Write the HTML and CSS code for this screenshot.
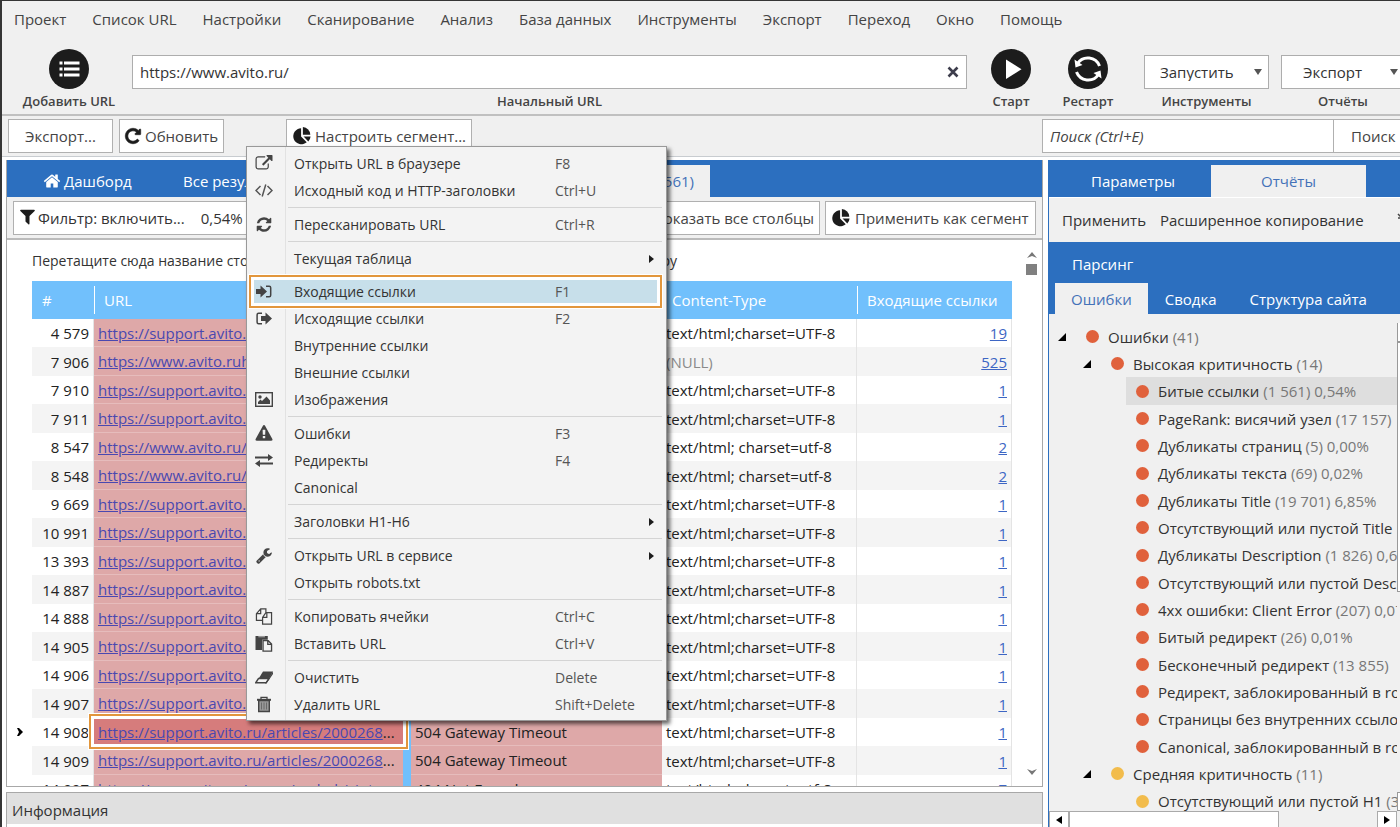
FILE: index.html
```html
<!DOCTYPE html>
<html lang="ru">
<head>
<meta charset="utf-8">
<title>Анализ сайта</title>
<link rel="stylesheet" href="styles.css">
</head>
<body>
<svg class="defs" aria-hidden="true">
  <symbol id="i-pie" viewBox="0 0 16 16"><path d="M7.2 1v7.4l5 5.2A7.2 7.2 0 1 1 7.200 1z"/><path d="M8.800 0a7 7 0 0 1 6.600 6.800H8.800z"/><path d="M9.400 8.400h6.200a7 7 0 0 1-2 4.400z"/></symbol>
  <symbol id="i-refresh" viewBox="0 0 1792 1792"><path d="M1639 1056q0 5-1 7-64 268-268 434.500t-478 166.500q-146 0-282.500-55t-243.500-157l-129 129q-19 19-45 19t-45-19-19-45v-448q0-26 19-45t45-19h448q26 0 45 19t19 45-19 45l-137 137q71 66 161 102t187 36q134 0 250-65t186-179q11-17 53-117 8-23 30-23h192q13 0 22.500 9.500t9.500 22.500zm25-800v448q0 26-19 45t-45 19h-448q-26 0-45-19t-19-45 19-45l138-138q-148-137-349-137-134 0-250 65t-186 179q-11 17-53 117-8 23-30 23h-199q-13 0-22.500-9.500t-9.500-22.500v-7q65-268 270-434.500t480-166.500q146 0 284 55.500t245 156.500l130-129q19-19 45-19t45 19 19 45z"/></symbol>
</svg>
<div class="window">
  <nav class="menubar">
    <button>Проект</button><button>Список URL</button><button>Настройки</button><button>Сканирование</button><button>Анализ</button><button>База данных</button><button>Инструменты</button><button>Экспорт</button><button>Переход</button><button>Окно</button><button>Помощь</button>
  </nav>

  <header class="toolbar">
    <button class="tool add"><svg class="round" viewBox="0 0 40 40"><circle cx="20" cy="20" r="20"/><path d="M15 12.500h15.500v3H15zM15 18.500h15.500v3H15zM15 24.500h15.500v3H15zM10.500 12.500h3v3h-3zM10.500 18.500h3v3h-3zM10.500 24.500h3v3h-3z" fill="#fff"/></svg><span>Добавить URL</span></button>
    <div class="field url">
      <div class="box">
        <input id="start-url" type="text" value="https://www.avito.ru/">
        <button class="clear" aria-label="Очистить поле"><svg viewBox="0 0 12 12"><path d="M1.500 1.500l9 9M10.500 1.500l-9 9" stroke="#3d3d4c" stroke-width="2.600"/></svg></button>
      </div>
      <label for="start-url">Начальный URL</label>
    </div>
    <button class="tool start"><svg class="round" viewBox="0 0 40 40"><circle cx="20" cy="20" r="20"/><path d="M15 10.500v19.500l15.500-9.700z" fill="#fff"/></svg><span>Старт</span></button>
    <button class="tool restart"><svg class="round" viewBox="0 0 40 40"><circle cx="20" cy="20" r="20"/><g fill="none" stroke="#fff" stroke-width="3"><path d="M9.500 14.500a12.500 12.500 0 0 1 22 2.500"/><path d="M30.500 25.500a12.500 12.500 0 0 1-22-2.500"/></g><path d="M6.500 10.500l1 8 7-2.500z M33.500 29.500l-1-8-7 2.500z" fill="#fff"/></svg><span>Рестарт</span></button>
    <div class="field run">
      <div class="box"><select id="run"><option>Запустить</option></select><svg class="caret" viewBox="0 0 8 8"><path d="M0 1h8L4 7z"/></svg></div>
      <label for="run">Инструменты</label>
    </div>
    <div class="field reports">
      <div class="box"><select id="reports"><option>Экспорт</option></select><svg class="caret" viewBox="0 0 8 8"><path d="M0 1h8L4 7z"/></svg></div>
      <label for="reports">Отчёты</label>
    </div>
  </header>

  <div class="actions">
    <button class="btn export">Экспорт...</button>
    <button class="btn update"><svg viewBox="0 0 1792 1792"><path d="M1664 256v448q0 26-19 45t-45 19h-448q-42 0-59-40-17-39 14-69l138-138q-148-137-349-137-104 0-198.500 40.500t-163.500 109.500-109.500 163.500-40.500 198.500 40.500 198.500 109.500 163.500 163.500 109.500 198.500 40.500q119 0 225-52t179-147q7-10 23-12 15 0 25 9l137 138q9 8 9.500 20.500t-7.500 22.500q-109 132-264 204.500t-327 72.500q-156 0-298-61t-245-164-164-245-61-298 61-298 164-245 245-164 298-61q147 0 284.500 55.500t244.500 156.500l130-129q29-31 70-14 39 17 39 59z" stroke="#1c1c1c" stroke-width="60"/></svg>Обновить</button>
    <button class="btn segment"><svg><use href="#i-pie"/></svg>Настроить сегмент...</button>
    <form class="search"><input type="search" placeholder="Поиск (Ctrl+E)" aria-label="Поиск"><button class="btn" type="button">Поиск</button></form>
  </div>

  <main class="work">
    <div class="left">
      <section class="results">
        <div class="tabs">
          <button class="tab home"><svg viewBox="0 0 1792 1792"><path d="M1472 992v480q0 26-19 45t-45 19h-384v-384h-256v384h-384q-26 0-45-19t-19-45v-480q0-1 .5-3t.5-3l575-474 575 474q1 2 1 6zm223-69l-62 74q-8 9-21 11h-3q-13 0-21-7l-692-577-692 577q-12 8-24 7-13-2-21-11l-62-74q-8-10-7-23.500t11-21.500l719-599q32-26 76-26t76 26l244 204v-195q0-14 9-23t23-9h192q14 0 23 9t9 23v408l219 182q10 8 11 21.500t-7 23.500z"/></svg>Дашборд</button>
          <button class="tab all">Все результаты</button>
          <button class="tab current">Битые ссылки (1 561)</button>
        </div>
        <div class="filterbar">
          <div class="filter"><button><svg viewBox="0 0 1792 1792"><path d="M1595 295q17 41-14 70l-493 493v742q0 42-39 59-13 5-25 5-27 0-45-19l-256-256q-19-19-19-45v-486l-493-493q-31-29-14-70 17-39 59-39h1280q42 0 59 39z" transform="translate(-90 -90) scale(1.100)"/></svg>Фильтр: включить...</button><span>0,54%</span></div>
          <button class="btn columns">Показать все столбцы</button>
          <button class="btn apply"><svg><use href="#i-pie"/></svg>Применить как сегмент</button>
        </div>
        <div class="grid">
          <div class="sheet">
            <p class="group"><span>Перетащите сюда название столбца,</span><span>чтобы группировать по параметру</span></p>
            <table>
              <colgroup><col class="c-mark"><col class="c-num"><col class="c-url"><col class="c-split"><col class="c-status"><col><col class="c-in"></colgroup>
              <thead><tr><td class="mark"></td><th>#</th><th class="bar">URL</th><th></th><th></th><th class="ctype">Content-Type</th><th class="bar last">Входящие ссылки</th></tr></thead>
              <tbody>
                <tr><td class="mark"></td><td class="num">4 579</td><td class="bad"><a href="#">https://support.avito.ru/articles/2000268</a>...</td><td class="split"></td><td class="bad"></td><td>text/html;charset=UTF-8</td><td class="in"><a href="#">19</a></td></tr>
                <tr><td class="mark"></td><td class="num">7 906</td><td class="bad"><a href="#">https://www.avito.ruhttps</a></td><td class="split"></td><td class="bad"></td><td class="null">(NULL)</td><td class="in"><a href="#">525</a></td></tr>
                <tr><td class="mark"></td><td class="num">7 910</td><td class="bad"><a href="#">https://support.avito.ru/articles/2000268</a>...</td><td class="split"></td><td class="bad"></td><td>text/html;charset=UTF-8</td><td class="in"><a href="#">1</a></td></tr>
                <tr><td class="mark"></td><td class="num">7 911</td><td class="bad"><a href="#">https://support.avito.ru/articles/2000268</a>...</td><td class="split"></td><td class="bad"></td><td>text/html;charset=UTF-8</td><td class="in"><a href="#">1</a></td></tr>
                <tr><td class="mark"></td><td class="num">8 547</td><td class="bad"><a href="#">https://www.avito.ru/</a></td><td class="split"></td><td class="bad"></td><td>text/html; charset=utf-8</td><td class="in"><a href="#">2</a></td></tr>
                <tr><td class="mark"></td><td class="num">8 548</td><td class="bad"><a href="#">https://www.avito.ru/</a></td><td class="split"></td><td class="bad"></td><td>text/html; charset=utf-8</td><td class="in"><a href="#">2</a></td></tr>
                <tr><td class="mark"></td><td class="num">9 669</td><td class="bad"><a href="#">https://support.avito.ru/articles/2000268</a>...</td><td class="split"></td><td class="bad"></td><td>text/html;charset=UTF-8</td><td class="in"><a href="#">1</a></td></tr>
                <tr><td class="mark"></td><td class="num">10 991</td><td class="bad"><a href="#">https://support.avito.ru/articles/2000268</a>...</td><td class="split"></td><td class="bad"></td><td>text/html;charset=UTF-8</td><td class="in"><a href="#">1</a></td></tr>
                <tr><td class="mark"></td><td class="num">13 393</td><td class="bad"><a href="#">https://support.avito.ru/articles/2000268</a>...</td><td class="split"></td><td class="bad"></td><td>text/html;charset=UTF-8</td><td class="in"><a href="#">1</a></td></tr>
                <tr><td class="mark"></td><td class="num">14 887</td><td class="bad"><a href="#">https://support.avito.ru/articles/2000268</a>...</td><td class="split"></td><td class="bad"></td><td>text/html;charset=UTF-8</td><td class="in"><a href="#">1</a></td></tr>
                <tr><td class="mark"></td><td class="num">14 888</td><td class="bad"><a href="#">https://support.avito.ru/articles/2000268</a>...</td><td class="split"></td><td class="bad"></td><td>text/html;charset=UTF-8</td><td class="in"><a href="#">1</a></td></tr>
                <tr><td class="mark"></td><td class="num">14 905</td><td class="bad"><a href="#">https://support.avito.ru/articles/2000268</a>...</td><td class="split"></td><td class="bad"></td><td>text/html;charset=UTF-8</td><td class="in"><a href="#">1</a></td></tr>
                <tr><td class="mark"></td><td class="num">14 906</td><td class="bad"><a href="#">https://support.avito.ru/articles/2000268</a>...</td><td class="split"></td><td class="bad"></td><td>text/html;charset=UTF-8</td><td class="in"><a href="#">1</a></td></tr>
                <tr><td class="mark"></td><td class="num">14 907</td><td class="bad"><a href="#">https://support.avito.ru/articles/2000268</a>...</td><td class="split"></td><td class="bad"></td><td>text/html;charset=UTF-8</td><td class="in"><a href="#">1</a></td></tr>
                <tr><td class="mark"><svg viewBox="0 0 6 8"><path d="M0 0h2l4 4-4 4H0l2-4z"/></svg></td><td class="num">14 908</td><td class="bad picked"><a href="#">https://support.avito.ru/articles/2000268</a>...</td><td class="split"></td><td class="bad">504 Gateway Timeout</td><td>text/html;charset=UTF-8</td><td class="in"><a href="#">1</a></td></tr>
                <tr><td class="mark"></td><td class="num">14 909</td><td class="bad"><a href="#">https://support.avito.ru/articles/2000268</a>...</td><td class="split"></td><td class="bad">504 Gateway Timeout</td><td>text/html;charset=UTF-8</td><td class="in"><a href="#">1</a></td></tr>
                <tr><td class="mark"></td><td class="num">14 997</td><td class="bad"><a href="#">https://www.avito.ru/penza/mebel_i_interer</a></td><td class="split"></td><td class="bad">404 Not Found</td><td>text/html; charset=utf-8</td><td class="in"><a href="#">7</a></td></tr>
              </tbody>
            </table>
          </div>
          <div class="vscroll"><svg viewBox="0 0 10 6"><path d="M0 6l5-6 5 6-5-2z"/></svg><i></i><svg class="down" viewBox="0 0 10 6"><path d="M0 0l5 6 5-6-5 2z"/></svg></div>
        </div>
      </section>
      <section class="info"><h2>Информация</h2></section>
    </div>

    <aside class="right">
      <div class="tabs main-tabs"><button class="tab params">Параметры</button><button class="tab current">Отчёты</button></div>
      <div class="links"><button>Применить</button><button>Расширенное копирование</button><svg viewBox="0 0 8 16"><path d="M2 2l6 6M2 6h6M5 2v6" stroke="#444" stroke-width="1.500"/></svg></div>
      <div class="crawl">
        <h2>Парсинг</h2>
        <div class="tabs sub-tabs"><button class="tab current">Ошибки</button><button class="tab">Сводка</button><button class="tab">Структура сайта</button></div>
      </div>
      <div class="treewrap">
        <ul class="tree">
          <li class="l1"><svg viewBox="0 0 8 8"><path d="M8 0v8H0z"/></svg><b></b>Ошибки <em>(41)</em></li>
          <li class="l2"><svg viewBox="0 0 8 8"><path d="M8 0v8H0z"/></svg><b></b>Высокая критичность <em>(14)</em></li>
          <li class="l3 sel"><b></b>Битые ссылки <em>(1 561) 0,54%</em></li>
          <li class="l3"><b></b>PageRank: висячий узел <em>(17 157)</em></li>
          <li class="l3"><b></b>Дубликаты страниц <em>(5) 0,00%</em></li>
          <li class="l3"><b></b>Дубликаты текста <em>(69) 0,02%</em></li>
          <li class="l3"><b></b>Дубликаты Title <em>(19 701) 6,85%</em></li>
          <li class="l3"><b></b>Отсутствующий или пустой Title</li>
          <li class="l3"><b></b>Дубликаты Description <em>(1 826) 0,63%</em></li>
          <li class="l3"><b></b>Отсутствующий или пустой Description</li>
          <li class="l3"><b></b>4xx ошибки: Client Error <em>(207) 0,07%</em></li>
          <li class="l3"><b></b>Битый редирект <em>(26) 0,01%</em></li>
          <li class="l3"><b></b>Бесконечный редирект <em>(13 855)</em></li>
          <li class="l3"><b></b>Редирект, заблокированный в robots.txt</li>
          <li class="l3"><b></b>Страницы без внутренних ссылок</li>
          <li class="l3"><b></b>Canonical, заблокированный в robots.txt</li>
          <li class="l2 mid"><svg viewBox="0 0 8 8"><path d="M8 0v8H0z"/></svg><b></b>Средняя критичность <em>(11)</em></li>
          <li class="l3 mid"><b></b>Отсутствующий или пустой H1 <em>(31)</em></li>
        </ul>
        <div class="tree-v"><i class="cap"></i><i class="thumb"></i><i class="cap end"></i></div>
      </div>
      <div class="hscroll"><i class="cap"><svg viewBox="0 0 6 8"><path d="M6 0v8L0 4z"/></svg></i><i class="thumb"></i><i class="cap end"><svg viewBox="0 0 6 8"><path d="M0 0v8l6-4z"/></svg></i></div>
    </aside>
  </main>

  <menu class="context">
    <li><button><svg viewBox="0 0 1792 1792"><path d="M1408 928v320q0 119-84.500 203.500t-203.500 84.500h-832q-119 0-203.500-84.500t-84.500-203.500v-832q0-119 84.500-203.500t203.500-84.500h704q14 0 23 9t9 23v64q0 14-9 23t-23 9h-704q-66 0-113 47t-47 113v832q0 66 47 113t113 47h832q66 0 113-47t47-113v-320q0-14 9-23t23-9h64q14 0 23 9t9 23zm384-864v512q0 26-19 45t-45 19-45-19l-176-176-652 652q-10 10-23 10t-23-10l-114-114q-10-10-10-23t10-23l652-652-176-176q-19-19-19-45t19-45 45-19h512q26 0 45 19t19 45z"/></svg><span>Открыть URL в браузере</span><kbd>F8</kbd></button></li>
    <li><button><svg viewBox="0 0 18 16"><path d="M5.500 3.500L1 8l4.500 4.500M12.500 3.500L17 8l-4.500 4.500M10.800 2L7.200 14" fill="none" stroke="#555" stroke-width="1.500"/></svg><span>Исходный код и HTTP-заголовки</span><kbd>Ctrl+U</kbd></button></li>
    <li class="cut"><button><svg><use href="#i-refresh"/></svg><span>Пересканировать URL</span><kbd>Ctrl+R</kbd></button></li>
    <li class="cut sub"><button><i></i><span>Текущая таблица</span><svg class="more" viewBox="0 0 5 8"><path d="M0 0v8l5-4z"/></svg></button></li>
    <li class="hot"><button><svg viewBox="0 0 18 16"><path d="M1 5.500h4.500V2L12 8l-6.500 6v-3.500H1z"/><path d="M11 2.800h3.200q1.500 0 1.500 1.500v7.400q0 1.500-1.500 1.500H11" fill="none" stroke="#444" stroke-width="1.500"/></svg><span>Входящие ссылки</span><kbd>F1</kbd></button></li>
    <li><button><svg viewBox="0 0 18 16"><path d="M6 5.500h4.500V2L17 8l-6.500 6v-3.500H6z"/><path d="M7 2.800H3.600q-1.500 0-1.500 1.500v7.400q0 1.500 1.500 1.500H7" fill="none" stroke="#444" stroke-width="1.500"/></svg><span>Исходящие ссылки</span><kbd>F2</kbd></button></li>
    <li><button><i></i><span>Внутренние ссылки</span></button></li>
    <li><button><i></i><span>Внешние ссылки</span></button></li>
    <li><button><svg viewBox="0 0 18 16"><rect x=".7" y="1.200" width="16.600" height="13.600" fill="none" stroke="#444" stroke-width="1.400"/><circle cx="5" cy="5.500" r="1.700"/><path d="M3 12.500v-2l2.500-2.500 1.500 1.500 4.500-4.500 3.500 4v3.500z"/></svg><span>Изображения</span></button></li>
    <li class="cut"><button><svg viewBox="0 0 1792 1792"><path d="M1024 1375v-190q0-14-9.500-23.500t-22.500-9.500h-192q-13 0-22.500 9.500t-9.500 23.500v190q0 14 9.500 23.500t22.500 9.500h192q13 0 22.500-9.500t9.500-23.500zm-2-374l18-459q0-12-10-19-13-11-24-11h-220q-11 0-24 11-10 7-10 21l17 457q0 10 10 16.500t24 6.500h185q14 0 23.500-6.500t10.500-16.500zm-14-934l768 1408q35 63-2 126-17 29-46.500 46t-63.500 17h-1536q-34 0-63.500-17t-46.500-46q-37-63-2-126l768-1408q17-31 47-49t65-18 65 18 47 49z"/></svg><span>Ошибки</span><kbd>F3</kbd></button></li>
    <li><button><svg viewBox="0 0 18 16"><path d="M0 4h13V1.500l5 3.500-5 3.500V6H0zM18 10H5V7.500L0 11l5 3.500V12h13z"/></svg><span>Редиректы</span><kbd>F4</kbd></button></li>
    <li><button><i></i><span>Canonical</span></button></li>
    <li class="cut sub"><button><i></i><span>Заголовки H1-H6</span><svg class="more" viewBox="0 0 5 8"><path d="M0 0v8l5-4z"/></svg></button></li>
    <li class="cut sub"><button><svg viewBox="0 0 1792 1792"><path d="M448 1472q0-26-19-45t-45-19-45 19-19 45 19 45 45 19 45-19 19-45zm644-420l-682 682q-37 37-90 37-52 0-91-37l-106-108q-38-36-38-90 0-53 38-91l681-681q39 98 114.500 173.500t173.500 114.500zm634-435q0 39-23 106-47 134-164.500 217.500t-258.500 83.500q-185 0-316.500-131.500t-131.500-316.500 131.500-316.500 316.500-131.500q58 0 121.500 16.500t107.500 46.500q16 11 16 28t-16 28l-293 169v224l193 107q5-3 79-48.500t135.500-81 70.500-35.500q15 0 23.500 10t8.500 25z"/></svg><span>Открыть URL в сервисе</span><svg class="more" viewBox="0 0 5 8"><path d="M0 0v8l5-4z"/></svg></button></li>
    <li><button><i></i><span>Открыть robots.txt</span></button></li>
    <li class="cut"><button><svg viewBox="0 0 18 18"><g fill="none" stroke="#444" stroke-width="1.300"><path d="M8 13H1V6l4.500-5H11v4M5.500 1v5H1M11 5l-3.500 5v7H17V5zM12 5v5H7.500"/></g></svg><span>Копировать ячейки</span><kbd>Ctrl+C</kbd></button></li>
    <li><button><svg viewBox="0 0 18 18"><path d="M0 1h13V5H7v11H0z"/><path d="M3 1h7v1.500H3z" fill="#999"/><path d="M8 6h5.500L17 9.500V17H8zM13 6v4h4" fill="#f3f3f3" stroke="#444" stroke-width="1.400"/></svg><span>Вставить URL</span><kbd>Ctrl+V</kbd></button></li>
    <li class="cut"><button><svg viewBox="0 0 18 16"><path d="M8 2h10l-3.500 6.500H4z"/><path d="M3.500 9h10.500l-3 4.300H.7z" fill="none" stroke="#444" stroke-width="1.400"/><path d="M18 2v2.500l-6.500 9.500H10l4-5.500z"/></svg><span>Очистить</span><kbd>Delete</kbd></button></li>
    <li><button><svg viewBox="0 0 18 16"><path d="M3.700 4h10.600v11H3.700z" fill="#999" stroke="#444" stroke-width="1.400"/><path d="M6 2.700V.9h6v1.800" fill="none" stroke="#444" stroke-width="1.300"/><path d="M2 2.300h14v2H2z"/><path d="M6.500 6v7M9 6v7M11.500 6v7" stroke="#6a6a6a"/></svg><span>Удалить URL</span><kbd>Shift+Delete</kbd></button></li>
  </menu>
</div>
</body>
</html>
```
FILE: styles.css
```css
* { box-sizing: border-box; }

body {
  margin: 0;
  font: 15px/20px "Open Sans", "Noto Sans", sans-serif;
  color: #333;
  background: #f0f0f0;
  overflow: hidden;
}

button, input, select { font: inherit; color: inherit; border: 0; margin: 0; padding: 0; background: none; border-radius: 0; }
button { white-space: nowrap; text-align: left; }
h2 { margin: 0; font-size: 15px; font-weight: 400; }
i, em { font-style: normal; }
.defs { display: none; }

.window {
  position: relative;
  display: flex;
  flex-direction: column;
  height: 100vh;
  border-left: 2px solid #353535;
  border-top: 1px solid #353535;
}

.menubar { display: flex; gap: 26px; padding: 8px 12px 11px; color: #444; }

/* Main toolbar */
.toolbar { display: flex; align-items: flex-start; margin-right: -5px; padding: 9px 0 4px 17px; border-bottom: 2px solid #c0c0c0; font-size: 13px; line-height: 18px; }
.tool { display: flex; flex-direction: column; align-items: center; gap: 3px; font-weight: 600; color: #444; }
.round { width: 40px; height: 40px; fill: #1c1c1c; }
.add { width: 100px; }
.start { width: 60px; margin-left: 14px; }
.restart { width: 60px; margin-left: 17px; }
.field { display: flex; flex-direction: column; align-items: stretch; gap: 3px; padding-top: 6px; }
.field label { text-align: center; font-weight: 600; color: #444; }
.box { position: relative; display: flex; align-items: center; height: 34px; border: 1px solid #adadad; background: #fff; font-size: 15px; }
.url { flex: 1; margin-left: 13px; }
.url input { flex: 1; padding: 0 7px; outline: 0; }
.clear { width: 26px; height: 30px; padding: 9px 7px; display: flex; }
.clear svg { width: 12px; height: 12px; }
.field select { appearance: none; width: 100%; height: 32px; padding-left: 15px; }
.caret { position: absolute; right: 6px; top: 12px; width: 8px; height: 8px; fill: #555; }
.run { width: 125px; margin-left: 26px; }
.reports { width: 124px; margin-left: 12px; }
.reports select { padding-left: 21px; }

/* Actions row */
.actions { display: flex; padding: 3px 0 3px 6px; border-bottom: 1px solid #c8ccd0; }
.btn { display: inline-flex; align-items: center; height: 34px; border: 1px solid #b0b0b0; background: #fff; color: #444; }
.btn svg { width: 18px; height: 18px; fill: #1c1c1c; }
.export { width: 105px; justify-content: center; }
.update { width: 105px; margin-left: 6px; padding-left: 4px; gap: 3px; }
.segment { width: 186px; margin-left: 62px; padding-left: 6px; gap: 4px; }
.search { display: flex; margin-left: auto; margin-right: -5px; }
.search input { width: 292px; height: 34px; padding: 0 7px; border: 1px solid #b0b0b0; background: #fff; outline: 0; }
.search input::placeholder { font-style: italic; color: #444; opacity: 1; }
.search .btn { width: 72px; margin-left: -1px; padding-left: 17px; }

/* Work area */
.work { flex: 1; min-height: 0; display: flex; gap: 5px; padding-left: 4px; padding-top: 3px; background: #fff; }
.left { flex: 1; min-width: 0; display: flex; flex-direction: column; gap: 5px; }
.results { flex: 1; min-height: 0; display: flex; flex-direction: column; border: 1px solid #a8a8a8; border-top: 0; }
.tabs { display: flex; background: #2c6fbf; color: #fff; }
.tab { height: 32px; }
.tab.current { background: #f0f0f0; color: #4472b8; }
.results .tabs { padding-top: 5px; }
.tab svg { width: 18px; height: 18px; fill: #fff; vertical-align: -3px; margin-right: 3px; }
.home { margin-left: 36px; width: 140px; }
.all { width: 120px; }
.results .current { margin-left: 207px; width: 200px; padding-right: 16px; text-align: right; }
.filterbar { display: flex; gap: 5px; padding: 4px 6px 3px; background: #f0f0f0; border-bottom: 2px solid #bbb; }
.filter { display: flex; align-items: center; gap: 16px; width: 500px; height: 34px; padding-left: 5px; border: 1px solid #b0b0b0; background: #fff; }
.filter svg { width: 17px; height: 17px; fill: #1c1c1c; vertical-align: -1px; margin-right: 2px; }
.columns { margin-left: auto; width: 170px; padding-right: 5px; justify-content: flex-end; }
.apply { width: 211px; padding-left: 6px; gap: 5px; }

.grid { flex: 1; min-height: 0; display: flex; background: #fff; }
.sheet { flex: 1; min-width: 0; overflow: hidden; }
.group { display: flex; justify-content: space-between; width: 645px; margin: 0 0 0 25px; padding: 11px 0 10px; font-size: 14px; }
table { width: 100%; table-layout: fixed; border-collapse: separate; border-spacing: 0; }
.c-mark { width: 25px; }
.c-num { width: 62px; }
.c-url { width: 309px; }
.c-split { width: 8px; }
.c-status { width: 251px; }
.c-in { width: 155px; }
th { height: 38px; padding: 0 10px; background: #71c0fc; color: #fff; font-weight: 400; text-align: left; white-space: nowrap; }
th.bar { background: linear-gradient(#fff, #fff) 0 50% / 1px 28px no-repeat #71c0fc; }
th.last { padding-right: 0; }
tbody td { height: 28px; padding: 0 4px; white-space: nowrap; border-right: 1px solid #e4e4e4; color: #222; }
tbody tr:nth-child(even) td { height: 29px; background: #f4f4f4; }
tbody td.mark, tbody tr:nth-child(even) td.mark { padding: 0 0 0 10px; background: #fff; border: 0; }
.mark svg { display: block; width: 6px; height: 8px; }
tbody td.num { padding-right: 4px; text-align: right; }
tbody td.bad, tbody tr:nth-child(even) td.bad { background: #dea8a8; border-right: 0; border-bottom: 1px solid #e6bcbc; overflow: hidden; }
tbody td.split, tbody tr:nth-child(even) td.split { padding: 0; background: #71c0fc; border: 0; }
.bad a { color: #4a48b0; }
tbody td.null { color: #8a8a8a; }
tbody td.in { text-align: right; }
.in a { color: #3d66c4; }
tbody td.bad.picked { position: relative; overflow: visible; background: #d67c7c; z-index: 1; }
.picked::after { content: ""; position: absolute; inset: -4px -5px -4px -5px; border: 2px solid #e2963c; box-shadow: inset 0 0 0 3px #fff, 0 0 0 1px #fff; }

.vscroll { width: 30px; padding: 12px 0 11px 9px; display: flex; flex-direction: column; align-items: center; }
.vscroll svg { width: 10px; height: 6px; fill: #777; }
.vscroll i { width: 11px; height: 11px; margin-top: 6px; background: #808080; }
.vscroll .down { margin-top: auto; }

.info { height: 35px; border: 1px solid #a8a8a8; border-bottom: 0; background: #fff; }
.info h2 { height: 31px; padding: 7px 5px 4px; background: #e0e0e0; }

/* Reports panel */
.right { width: 352px; display: flex; flex-direction: column; border-left: 1px solid #2c6fbf; background: #f0f0f0; overflow: hidden; }
.main-tabs { padding-top: 5px; }
.main-tabs .tab { width: 155px; text-align: center; }
.main-tabs .params { width: 162px; padding-left: 6px; }
.links { display: flex; align-items: center; gap: 14px; height: 45px; padding-left: 13px; border-top: 1px solid #fff; }
.links svg { width: 8px; height: 16px; margin-left: 18px; flex: none; }
.crawl { background: #2c6fbf; color: #fff; }
.crawl h2 { padding: 12px 23px 9px; }
.sub-tabs { padding-left: 6px; }
.sub-tabs .tab { padding: 0 16px; height: 31px; }
.sub-tabs .tab + .tab { padding-left: 17px; }
.treewrap { flex: 1; min-height: 0; display: flex; padding-top: 9px; }
.tree { flex: 1; min-width: 0; margin: 0; padding: 0; list-style: none; overflow: hidden; }
.tree li { display: flex; align-items: center; height: 27px; white-space: pre; }
.tree li:nth-child(3n) { height: 28px; }
.tree em { color: #777; }
.tree b { flex: none; width: 13px; height: 13px; margin-right: 9px; border-radius: 50%; background: #e0613c; }
.tree .mid b { background: #f2bc4c; }
.tree svg { flex: none; width: 8px; height: 8px; margin-right: 20px; }
.tree .l1 { padding-left: 9px; }
.tree .l2 { padding-left: 34px; }
.tree .l3 { padding-left: 10px; margin-left: 77px; }
.tree .sel { background: #dedede; }
.tree-v { width: 3px; display: flex; flex-direction: column; }
.tree-v i { border: 1px solid #999; border-right: 0; background: #fff; }
.tree-v .cap { height: 19px; border-top: 0; }
.tree-v .thumb { height: 250px; }
.tree-v .end { margin-top: auto; border-top: 1px solid #999; }
.hscroll { display: flex; height: 16px; margin-right: 3px; }
.hscroll i { border: 1px solid #aaa; border-bottom: 0; background: #fff; }
.hscroll .cap { width: 20px; display: flex; align-items: center; justify-content: center; }
.hscroll .thumb { width: 210px; }
.hscroll .end { margin-left: auto; }
.hscroll svg { width: 6px; height: 8px; }

/* Context menu */
.context {
  position: absolute;
  left: 244px;
  top: 145px;
  width: 421px;
  margin: 0;
  padding: 3px 3px 2px;
  list-style: none;
  font-size: 14px;
  background: linear-gradient(#e2e2e2, #e2e2e2) 38px 0 / 1px 100% no-repeat #f3f3f3;
  border: 1px solid #999;
  box-shadow: 3px 3px 4px rgba(0, 0, 0, .6);
  z-index: 2;
}
.context li { position: relative; }
.context button { display: grid; grid-template-columns: 36px 258px 1fr; align-items: center; width: 100%; height: 27px; padding-left: 5px; column-gap: 3px; color: #333; }
.context svg { width: 18px; height: 17px; fill: #444; }
.context kbd { font: inherit; color: #555; }
.context .cut { margin-top: 7px; }
.context .cut::before { content: ""; position: absolute; left: 38px; right: 1px; top: -4px; height: 1px; background: #d4d4d4; }
.context .sub button { grid-template-columns: 36px 1fr 14px; }
.context .more { width: 5px; height: 8px; fill: #1c1c1c; }
.context .hot { margin-top: 6px; }
.context .hot::before { content: ""; position: absolute; inset: -3px 1px -3px -1px; border: 2px solid #e2963c; box-shadow: inset 0 0 0 3px #fff, 0 0 0 1px #fff; background: #c7dfea; }
.context .hot button { position: relative; }
```
